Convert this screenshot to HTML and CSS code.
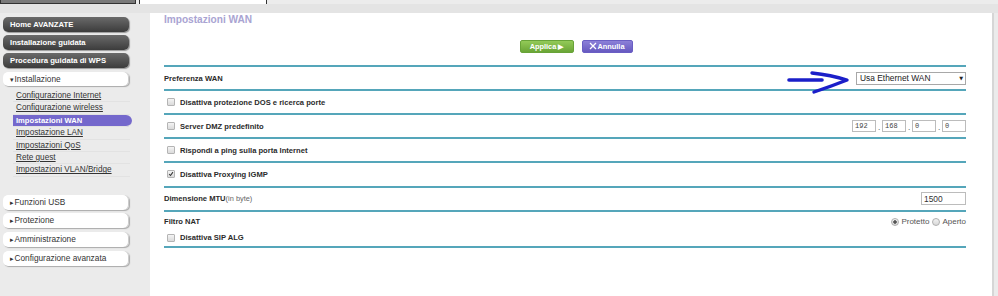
FILE: index.html
```html
<!DOCTYPE html>
<html lang="it">
<head>
    <meta charset="UTF-8">
    <title>Impostazioni WAN</title>
    <link rel="stylesheet" href="styles.css">
</head>
<body>
    <div class="tabs">
        <span class="tab tab-dark"></span>
        <span class="tab tab-white"></span>
    </div>
    <div class="band"></div>

    <div class="layout">
        <nav class="sidebar">
            <a class="nav-btn dark" href="#">Home AVANZATE</a>
            <a class="nav-btn dark" href="#">Installazione guidata</a>
            <a class="nav-btn dark" href="#">Procedura guidata di WPS</a>
            <div class="nav-btn light open"><span class="tri">&#9662;</span>Installazione</div>
            <ul class="sub">
                <li><a href="#">Configurazione Internet</a></li>
                <li><a href="#">Configurazione wireless</a></li>
                <li class="current"><a href="#">Impostazioni WAN</a></li>
                <li><a href="#">Impostazione LAN</a></li>
                <li><a href="#">Impostazioni QoS</a></li>
                <li><a href="#">Rete guest</a></li>
                <li><a href="#">Impostazioni VLAN/Bridge</a></li>
            </ul>
            <div class="nav-group">
                <div class="nav-btn light"><span class="tri">&#9656;</span>Funzioni USB</div>
                <div class="nav-btn light"><span class="tri">&#9656;</span>Protezione</div>
                <div class="nav-btn light"><span class="tri">&#9656;</span>Amministrazione</div>
                <div class="nav-btn light"><span class="tri">&#9656;</span>Configurazione avanzata</div>
            </div>
        </nav>

        <main class="main">
            <h1 class="title">Impostazioni WAN</h1>
            <div class="actions">
                <button class="btn apply">Applica &#9654;</button>
                <button class="btn cancel">
                    <svg width="8" height="8" viewBox="0 0 8 8"><path d="M1 1L7 7M7 1L1 7" stroke="#fff" stroke-width="1.3" fill="none"/></svg>Annulla
                </button>
            </div>

            <div class="rows">
                <div class="row">
                    <span class="label">Preferenza WAN</span>
                    <div class="right">
                        <!-- hand drawn pointer -->
                        <svg class="pointer" width="66" height="27" viewBox="0 0 66 27">
                            <path d="M4 12L37 12" stroke="#1b1fc9" stroke-width="3.6" stroke-linecap="round" fill="none"/>
                            <path d="M27 5Q46 7 62 12Q47 18 29 24" stroke="#1b1fc9" stroke-width="3.4" stroke-linecap="round" stroke-linejoin="round" fill="none"/>
                        </svg>
                        <div class="select">Usa Ethernet WAN<span class="caret">&#9660;</span></div>
                    </div>
                </div>
                <div class="row">
                    <label class="check"><input type="checkbox"><span class="label">Disattiva protezione DOS e ricerca porte</span></label>
                </div>
                <div class="row">
                    <label class="check"><input type="checkbox"><span class="label">Server DMZ predefinito</span></label>
                    <div class="ip">
                        <input type="text" value="192"><span>.</span><input type="text" value="168"><span>.</span><input type="text" value="0"><span>.</span><input type="text" value="0">
                    </div>
                </div>
                <div class="row">
                    <label class="check"><input type="checkbox"><span class="label">Rispondi a ping sulla porta Internet</span></label>
                </div>
                <div class="row">
                    <label class="check"><input type="checkbox" checked><span class="label">Disattiva Proxying IGMP</span></label>
                </div>
                <div class="row">
                    <span class="label">Dimensione MTU<span class="hint">(in byte)</span></span>
                    <input class="mtu" type="text" value="1500">
                </div>
                <div class="row nat">
                    <div class="nat-line">
                        <span class="label">Filtro NAT</span>
                        <div class="radios">
                            <label><input type="radio" name="nat" checked>Protetto</label>
                            <label><input type="radio" name="nat">Aperto</label>
                        </div>
                    </div>
                    <div class="nat-line">
                        <label class="check"><input type="checkbox"><span class="label">Disattiva SIP ALG</span></label>
                    </div>
                </div>
            </div>
        </main>
    </div>
</body>
</html>
```

FILE: styles.css
```css
body {
    margin: 0;
    padding: 0;
    font-family: "Liberation Sans", Arial, sans-serif;
    background-color: #ebebeb;
    color: #333;
    overflow: hidden;
}
.tabs {
    display: flex;
    height: 4px;
    background-color: #ececec;
}
.tab-dark {
    width: 134px;
    background-color: #7a7a7a;
    border: 1px solid #333;
    border-top: none;
}
.tab-white {
    width: 126px;
    margin-left: 3px;
    background-color: #fff;
    border-left: 1px solid #333;
    border-right: 1px solid #333;
}
.band {
    height: 9px;
    background-color: #e4e4e4;
}
.layout {
    display: flex;
    height: 283px;
}
.sidebar {
    width: 147px;
    padding: 4px 0 0 3px;
}
.nav-btn {
    display: block;
    width: 119px;
    height: 15px;
    line-height: 15px;
    padding-left: 7px;
    margin-bottom: 3px;
    border-radius: 5px;
    font-size: 8.3px;
    text-decoration: none;
    box-sizing: content-box;
}
.nav-btn.dark {
    background: linear-gradient(#6a6a6a, #3c3c3c);
    color: #fff;
    font-weight: bold;
    font-size: 7.7px;
    box-shadow: 1px 1px 1px #999;
}
.nav-btn.light {
    background-color: #fff;
    color: #333;
    box-shadow: 1px 1px 1px #aaa, inset -1px 0 0 #ccc;
}
.nav-btn.open {
    margin-top: 4px;
    height: 14px;
    line-height: 14px;
}
.tri {
    font-family: "DejaVu Sans", sans-serif;
    font-size: 7px;
    margin-right: 1px;
    vertical-align: 0;
}
.sub {
    list-style: none;
    margin: 4px 0 0 10px;
    padding: 0;
}
.sub li {
    height: 12.4px;
    line-height: 12px;
    width: 117px;
    padding-left: 3px;
    border-bottom: 1px solid #e2e2e2;
    box-sizing: border-box;
    font-size: 8.2px;
}
.sub a {
    color: #333;
}
.sub li.current {
    width: 119px;
    background-color: #7468cc;
    border-radius: 0 7px 7px 0;
}
.sub li.current a {
    color: #fff;
    font-weight: bold;
    font-size: 7.6px;
    text-decoration: none;
}
.nav-group {
    margin-top: 18px;
}
.nav-group .nav-btn {
    margin-bottom: 3.7px;
}
.main {
    flex: 1;
    background-color: #fff;
    padding: 0 26px 0 14px;
    margin-right: 4px;
    border-right: 2px solid #d6d6d6;
}
.title {
    margin: 0;
    font-size: 10.1px;
    line-height: 14px;
    color: #a9a4d2;
}
.actions {
    display: flex;
    justify-content: center;
    gap: 8px;
    margin: 13px 0 12px;
    padding-left: 22px;
}
.btn {
    height: 13px;
    padding: 0;
    border-radius: 2px;
    color: #fff;
    font-family: inherit;
    font-weight: bold;
    font-size: 7.4px;
    line-height: 11px;
    cursor: pointer;
}
.btn.apply {
    width: 54px;
    background: linear-gradient(#93ca58, #6aa536);
    border: 1px solid #68a338;
}
.btn.cancel {
    width: 51px;
    background: linear-gradient(#8c80d8, #6659c0);
    border: 1px solid #6a5ec4;
}
.btn.cancel svg {
    vertical-align: -1px;
}
.row {
    display: flex;
    align-items: center;
    justify-content: space-between;
    height: 22px;
    border-top: 2px solid #55a6ba;
    font-size: 7.6px;
}
.row:nth-child(3),
.row:nth-child(4),
.row:nth-child(5),
.row:nth-child(6) {
    height: 22.2px;
}
.label {
    font-weight: bold;
    color: #2b2b2b;
}
.label .hint {
    font-weight: normal;
    color: #666;
    font-size: 7.4px;
}
.right {
    display: flex;
    align-items: center;
}
.pointer {
    display: block;
    align-self: flex-start;
    margin: 1px 5px -6px 0;
}
.select {
    display: flex;
    justify-content: space-between;
    align-items: center;
    width: 103px;
    height: 11px;
    padding: 0 2px 0 3px;
    border: 1px solid #a8a8a8;
    font-size: 8.4px;
    color: #222;
}
.caret {
    font-family: "DejaVu Sans", sans-serif;
    font-size: 5px;
}
.check {
    display: flex;
    align-items: center;
    padding-left: 3px;
}
.check input {
    appearance: none;
    width: 8px;
    height: 8px;
    margin: 0 5px 0 0;
    border: 1px solid #b4b4b4;
    border-radius: 1px;
    background: linear-gradient(#f4f4f4, #dadada);
}
.check input:checked {
    background: url("data:image/svg+xml,%3Csvg xmlns='http://www.w3.org/2000/svg' viewBox='0 0 8 8'%3E%3Cpath d='M1.5 4L3.3 6L6.6 1.5' stroke='%23333' stroke-width='1.4' fill='none'/%3E%3C/svg%3E"), linear-gradient(#f4f4f4, #dadada);
}
.ip {
    display: flex;
    align-items: flex-end;
    gap: 1px;
}
.ip span {
    width: 4px;
    text-align: center;
    font-size: 8px;
}
.ip input {
    width: 24px;
    height: 12px;
    padding: 0 2px;
    border: 1px solid #bcbcbc;
    box-sizing: border-box;
    font-family: "Liberation Mono", monospace;
    font-size: 7px;
    color: #444;
}
.mtu {
    width: 45px;
    height: 13px;
    padding: 0 2px;
    border: 1px solid #bcbcbc;
    box-sizing: border-box;
    font-family: inherit;
    font-size: 8.4px;
    color: #333;
}
.row.nat {
    display: block;
    padding-top: 3px;
    box-sizing: border-box;
    border-bottom: 2px solid #55a6ba;
    height: 38px;
}
.nat-line {
    display: flex;
    align-items: center;
    justify-content: space-between;
    height: 14px;
    margin-bottom: 2px;
}
.radios {
    display: flex;
    gap: 3px;
    font-size: 8px;
    color: #555;
}
.radios label {
    display: flex;
    align-items: center;
}
.radios input {
    appearance: none;
    width: 8px;
    height: 8px;
    margin: 0 2px 0 0;
    border: 1px solid #b0b0b0;
    border-radius: 50%;
    background: linear-gradient(#f2f2f2, #d8d8d8);
}
.radios input:checked {
    background: radial-gradient(circle, #555 35%, transparent 45%), linear-gradient(#f2f2f2, #d8d8d8);
}
```
